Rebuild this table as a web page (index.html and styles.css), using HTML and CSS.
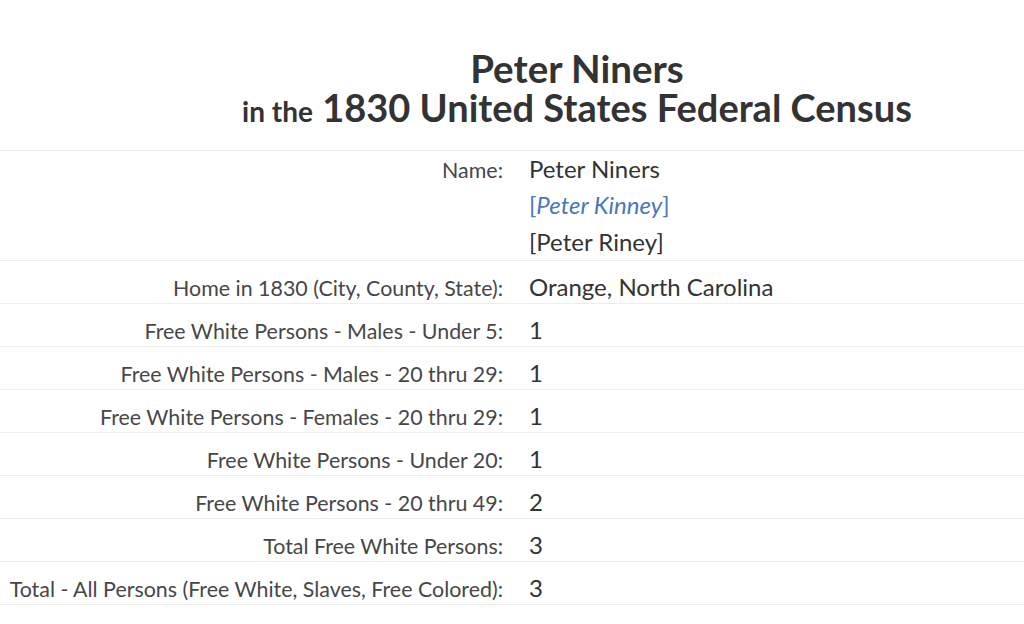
FILE: index.html
```html
<!DOCTYPE html>
<html lang="en">
<head>
<meta charset="utf-8">
<title>Peter Niners in the 1830 United States Federal Census</title>
<link rel="stylesheet" href="styles.css">
</head>
<body>
<main class="record">
  <header class="record-title">
    <h1 class="name">Peter Niners</h1>
    <h2 class="collection"><span class="small">in the</span> 1830 United States Federal Census</h2>
  </header>
  <div class="facts">
    <div class="row row-names">
      <div class="label">Name:</div>
      <div class="value names">
        <span>Peter Niners</span>
        <span class="alt"><span class="br">[</span><em>Peter Kinney</em><span class="br">]</span></span>
        <span>[Peter Riney]</span>
      </div>
    </div>
    <div class="row">
      <div class="label">Home in 1830 (City, County, State):</div>
      <div class="value">Orange, North Carolina</div>
    </div>
    <div class="row">
      <div class="label">Free White Persons - Males - Under 5:</div>
      <div class="value">1</div>
    </div>
    <div class="row">
      <div class="label">Free White Persons - Males - 20 thru 29:</div>
      <div class="value">1</div>
    </div>
    <div class="row">
      <div class="label">Free White Persons - Females - 20 thru 29:</div>
      <div class="value">1</div>
    </div>
    <div class="row">
      <div class="label">Free White Persons - Under 20:</div>
      <div class="value">1</div>
    </div>
    <div class="row">
      <div class="label">Free White Persons - 20 thru 49:</div>
      <div class="value">2</div>
    </div>
    <div class="row">
      <div class="label">Total Free White Persons:</div>
      <div class="value">3</div>
    </div>
    <div class="row">
      <div class="label">Total - All Persons (Free White, Slaves, Free Colored):</div>
      <div class="value">3</div>
    </div>
  </div>
</main>
</body>
</html>
```

FILE: styles.css
```css
html, body {
  margin: 0;
  padding: 0;
  background: #ffffff;
}
body {
  font-family: Lato, "Liberation Sans", sans-serif;
  color: #333333;
  width: 1024px;
  height: 624px;
  overflow: hidden;
}
.record {
  padding-top: 48px;
}
.record-title {
  text-align: center;
  padding-left: 130px;
  padding-bottom: 20px;
  border-bottom: 1px solid #ececec;
}
.name {
  margin: 0;
  font-size: 38.5px;
  line-height: 40px;
  font-weight: 700;
  color: #333;
}
.collection {
  margin: 0;
  font-size: 38px;
  line-height: 38px;
  font-weight: 700;
  color: #333;
}
.collection .small {
  font-size: 28px;
}
.facts {
  display: flex;
  flex-direction: column;
}
.row {
  box-sizing: border-box;
  height: 43px;
  display: grid;
  grid-template-columns: 503px 1fr;
  column-gap: 26px;
  align-items: baseline;
  border-bottom: 1px solid #ececec;
  padding: 9px 0 0;
  line-height: 33px;
}
.row.row-names {
  height: auto;
  padding: 0;
  line-height: 36.3px;
}
.label {
  text-align: right;
  color: #474747;
  font-size: 21.4px;
}
.value {
  color: #333;
  font-size: 24px;
}
.names {
  display: flex;
  flex-direction: column;
}
.alt {
  color: #4a78b8;
}
.alt em {
  font-style: italic;
}
```
